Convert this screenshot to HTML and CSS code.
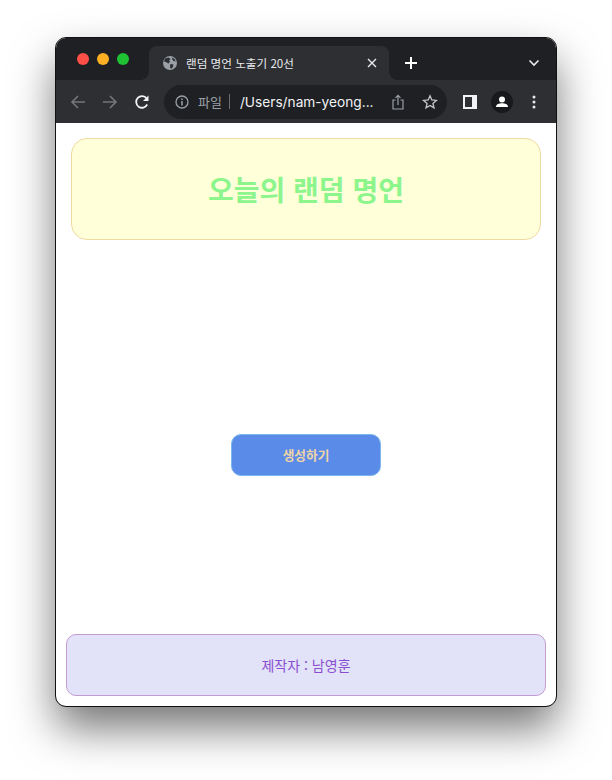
FILE: index.html
```html
<!DOCTYPE html>
<html lang="ko">
<head>
    <meta charset="UTF-8">
    <meta name="viewport" content="width=device-width, initial-scale=1.0">
    <title>랜덤 명언 노출기 20선</title>
    <link rel="stylesheet" href="styles.css">
</head>
<body>

    <div class="window">
        <!-- tab strip -->
        <div class="tabstrip">
            <div class="traffic">
                <span class="dot dot-red"></span>
                <span class="dot dot-yellow"></span>
                <span class="dot dot-green"></span>
            </div>
            <div class="tab">
                <svg class="globe" width="16" height="16" viewBox="0 0 16 16">
                    <circle cx="8" cy="8" r="7" fill="#9aa0a6"/>
                    <path d="M3 3.6 L6.6 2.6 L8.6 4 L7.2 5.6 L8 7 L6.4 8.6 L4 7 L2 6.4 Z M8.4 9 L11.4 9.6 L11 12 L9 14 L8 12 Z M10.6 2.4 L13 4.4 L13.6 6.6 L11.4 6 L10 4 Z" fill="#2e2f33"/>
                </svg>
                <span class="tab-title">랜덤 명언 노출기 20선</span>
                <svg class="tab-close" width="10" height="10" viewBox="0 0 10 10">
                    <path d="M1 1 L9 9 M9 1 L1 9" stroke="#e8eaed" stroke-width="1.4"/>
                </svg>
            </div>
            <svg class="new-tab" width="14" height="14" viewBox="0 0 14 14">
                <path d="M7 1 V13 M1 7 H13" stroke="#fff" stroke-width="2"/>
            </svg>
            <svg class="tab-list" width="12" height="8" viewBox="0 0 12 8">
                <path d="M1.5 1.5 L6 6 L10.500 1.5" fill="none" stroke="#e8eaed" stroke-width="1.6"/>
            </svg>
        </div>

        <!-- toolbar -->
        <div class="toolbar">
            <svg class="nav-icon" width="16" height="16" viewBox="0 0 16 16">
                <path d="M15 8 H2 M8 2 L2 8 L8 14" fill="none" stroke="#74767a" stroke-width="1.6"/>
            </svg>
            <svg class="nav-icon" width="16" height="16" viewBox="0 0 16 16">
                <path d="M1 8 H14 M8 2 L14 8 L8 14" fill="none" stroke="#74767a" stroke-width="1.6"/>
            </svg>
            <svg class="nav-icon" width="16" height="16" viewBox="0 0 16 16">
                <path d="M13.2 10.500 A5.800 5.800 0 1 1 12.600 4.400" fill="none" stroke="#f1f3f4" stroke-width="1.800"/>
                <path d="M14.500 1.500 V7 H9 Z" fill="#f1f3f4"/>
            </svg>
            <div class="omnibox">
                <svg class="info" width="14" height="14" viewBox="0 0 14 14">
                    <circle cx="7" cy="7" r="6" fill="none" stroke="#9aa0a6" stroke-width="1.300"/>
                    <path d="M7 6 V10.500 M7 3.400 V5" stroke="#9aa0a6" stroke-width="1.500"/>
                </svg>
                <span class="scheme">파일</span>
                <span class="divider"></span>
                <span class="url">/Users/nam-yeong...</span>
                <svg class="share" width="12" height="16" viewBox="0 0 12 16">
                    <path d="M3.500 6 H1 V15 H11 V6 H8.500 M6 11 V1.500 M3.500 3.800 L6 1.300 L8.500 3.800" fill="none" stroke="#9aa0a6" stroke-width="1.200"/>
                </svg>
                <svg class="star" width="16" height="16" viewBox="0 0 16 16">
                    <path d="M8 1.800 L9.800 6 L14.400 6.400 L10.900 9.400 L12 13.900 L8 11.500 L4 13.900 L5.100 9.400 L1.600 6.400 L6.200 6 Z" fill="none" stroke="#c4c7c9" stroke-width="1.300"/>
                </svg>
            </div>
            <svg class="panel" width="14" height="14" viewBox="0 0 14 14">
                <path d="M0 0 H14 V14 H0 Z M2 2 V12 H9 V2 Z" fill="#f1f3f4" fill-rule="evenodd"/>
            </svg>
            <div class="avatar">
                <svg width="22" height="22" viewBox="0 0 22 22">
                    <circle cx="11" cy="11" r="11" fill="#18191c"/>
                    <circle cx="11" cy="8.500" r="3" fill="#fff"/>
                    <path d="M5 16 C5 13 8 12.200 11 12.200 C14 12.200 17 13 17 16 Z" fill="#fff"/>
                </svg>
            </div>
            <svg class="menu" width="4" height="14" viewBox="0 0 4 14">
                <circle cx="2" cy="2" r="1.500" fill="#e8eaed"/>
                <circle cx="2" cy="7" r="1.500" fill="#e8eaed"/>
                <circle cx="2" cy="12" r="1.500" fill="#e8eaed"/>
            </svg>
        </div>

        <!-- page -->
        <div class="page">
            <div class="title-box">
                <h1>오늘의 랜덤 명언</h1>
            </div>
            <div class="content">
                <button class="generate-button">생성하기</button>
            </div>
            <div class="footer">제작자 : 남영훈</div>
        </div>
    </div>

</body>
</html>
```

FILE: styles.css
```css
html, body {
    margin: 0;
    height: 100%;
    background-color: #fff;
    overflow: hidden;
}
body {
    font-family: "Noto Sans CJK KR", "Liberation Sans", sans-serif;
    padding: 38px 56px 0;
    box-sizing: border-box;
}
.window {
    width: 500px;
    height: 668px;
    display: flex;
    flex-direction: column;
    border-radius: 10px;
    overflow: hidden;
    background-color: #fff;
    outline: 1px solid #111;
    outline-offset: 0;
    box-shadow: 0 22px 44px rgba(0, 0, 0, 0.55);
}
.tabstrip {
    height: 42px;
    display: flex;
    align-items: flex-end;
    background-color: #1f2024;
}
.traffic {
    display: flex;
    gap: 8px;
    width: 93px;
    padding: 0 0 15px 21px;
    box-sizing: border-box;
}
.dot {
    width: 12px;
    height: 12px;
    border-radius: 50%;
}
.dot-red {
    background-color: #ff5047;
}
.dot-yellow {
    background-color: #fdb023;
}
.dot-green {
    background-color: #1fc233;
}
.tab {
    position: relative;
    width: 240px;
    height: 34px;
    display: flex;
    align-items: center;
    background-color: #2e2f33;
    border-radius: 8px 8px 0 0;
    padding: 0 12px 0 13px;
    box-sizing: border-box;
}
/* flared corners where the tab meets the toolbar */
.tab::before, .tab::after {
    content: "";
    position: absolute;
    bottom: 0;
    width: 8px;
    height: 8px;
}
.tab::before {
    left: -8px;
    background: radial-gradient(circle at 0 0, #1f2024 7.5px, #2e2f33 8px);
}
.tab::after {
    right: -8px;
    background: radial-gradient(circle at 100% 0, #1f2024 7.5px, #2e2f33 8px);
}
.globe {
    margin-right: 8px;
}
.tab-title {
    flex: 1;
    color: #e8eaed;
    font-size: 11.6px;
    white-space: nowrap;
}
.new-tab {
    margin: 0 0 10px 15px;
}
.tab-list {
    margin: 0 0 13px 110px;
}
.toolbar {
    height: 43px;
    display: flex;
    align-items: center;
    background-color: #2e2f33;
    padding-left: 14px;
    box-sizing: border-box;
}
.nav-icon {
    margin-right: 16px;
}
.omnibox {
    width: 283px;
    height: 34px;
    margin-left: -2px;
    display: flex;
    align-items: center;
    background-color: #1f2024;
    border-radius: 17px;
    padding-left: 11px;
    box-sizing: border-box;
}
.scheme {
    margin-left: 9px;
    color: #9aa0a6;
    font-size: 13px;
}
.divider {
    width: 1px;
    height: 15px;
    margin: 0 10px 0 7px;
    background-color: #6b6e72;
}
.url {
    width: 152px;
    color: #f1f3f4;
    font-family: Inter, "Liberation Sans", sans-serif;
    font-size: 13.7px;
    white-space: nowrap;
}
.share {
    margin-left: 0;
}
.star {
    margin-left: 18px;
}
.panel {
    margin-left: 16px;
}
.avatar {
    width: 22px;
    height: 22px;
    margin-left: 14px;
}
.menu {
    margin-left: 19px;
}
.page {
    flex: 1;
    display: flex;
    flex-direction: column;
    background-color: #fff;
}
.title-box {
    height: 102px;
    margin: 15px 15px 0;
    display: flex;
    align-items: center;
    justify-content: center;
    background-color: #ffffd9;
    border: 1px solid #f0d9a0;
    border-radius: 16px;
    box-sizing: border-box;
}
.title-box h1 {
    margin: 0;
    color: #8cf58c;
    font-size: 28px;
    font-weight: 700;
}
.content {
    flex: 1;
    display: flex;
    justify-content: center;
    padding-top: 194px;
    box-sizing: border-box;
}
.generate-button {
    width: 150px;
    height: 42px;
    padding: 0 0 2px;
    background-color: #5b8be8;
    border: 1px solid #7cb8ee;
    border-radius: 10px;
    color: #efd5a8;
    font-family: inherit;
    font-size: 12.7px;
    font-weight: 700;
}
.footer {
    height: 62px;
    margin: 0 10px 10px;
    display: flex;
    align-items: center;
    justify-content: center;
    background-color: #e2e2f8;
    border: 1px solid #c49bd0;
    border-radius: 10px;
    box-sizing: border-box;
    color: #8a4fd0;
    font-size: 14px;
}
```
